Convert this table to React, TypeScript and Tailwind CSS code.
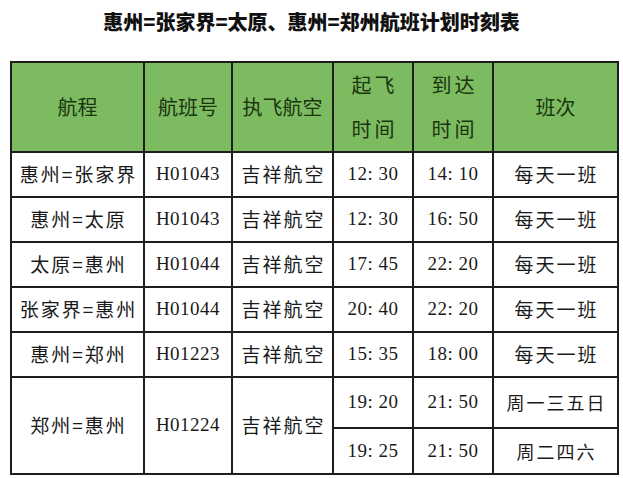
import React from "react";

const cjk = { fontFamily: '"Noto Sans CJK SC", "Noto Sans", sans-serif' };
const num = { fontFamily: '"Liberation Serif", "Noto Sans CJK SC", serif' };

type Row = {
  route: string;
  flight: string;
  airline: string;
  dep: string;
  arr: string;
  freq: string;
};

const rows: Row[] = [
  { route: "惠州=张家界", flight: "H01043", airline: "吉祥航空", dep: "12: 30", arr: "14: 10", freq: "每天一班" },
  { route: "惠州=太原", flight: "H01043", airline: "吉祥航空", dep: "12: 30", arr: "16: 50", freq: "每天一班" },
  { route: "太原=惠州", flight: "H01044", airline: "吉祥航空", dep: "17: 45", arr: "22: 20", freq: "每天一班" },
  { route: "张家界=惠州", flight: "H01044", airline: "吉祥航空", dep: "20: 40", arr: "22: 20", freq: "每天一班" },
  { route: "惠州=郑州", flight: "H01223", airline: "吉祥航空", dep: "15: 35", arr: "18: 00", freq: "每天一班" },
];

const td = "border-2 border-[#1e1e1e] text-center align-middle p-0 text-[#1a1a1a]";
const th = "border-2 border-[#1e1e1e] bg-[#7dbb60] text-center align-middle p-0 font-normal text-[#1a3510] text-[20px]";
const cjkCell = "text-[19px] tracking-[2px] pl-[2px]";
const numCell = "text-[19px] tracking-[0.5px] text-[#0a0a0a]";

export default function App() {
  return (
    <div className="w-[623px] h-[478px] bg-white overflow-hidden">
      <h1
        className="pt-[9px] h-[61px] text-center text-[20px] font-black text-[#111111] leading-[26px]"
        style={cjk}
      >
        惠州=张家界=太原、惠州=郑州航班计划时刻表
      </h1>
      <table className="ml-[10px] border-collapse table-fixed w-[607px]" style={cjk}>
        <colgroup>
          <col className="w-[133px]" />
          <col className="w-[88px]" />
          <col className="w-[101px]" />
          <col className="w-[80px]" />
          <col className="w-[80px]" />
          <col className="w-[125px]" />
        </colgroup>
        <thead>
          <tr className="h-[89px]">
            <th className={th}>航程</th>
            <th className={th}>航班号</th>
            <th className={th}>执飞航空</th>
            <th className={th}>
              <div className="leading-[44px] tracking-[3px] pl-[3px]">
                起飞
                <br />
                时间
              </div>
            </th>
            <th className={th}>
              <div className="leading-[44px] tracking-[3px] pl-[3px]">
                到达
                <br />
                时间
              </div>
            </th>
            <th className={th}>班次</th>
          </tr>
        </thead>
        <tbody>
          {rows.map((r, i) => (
            <tr key={i} className="h-[45px]">
              <td className={`${td} ${cjkCell}`}>{r.route}</td>
              <td className={`${td} ${numCell}`} style={num}>{r.flight}</td>
              <td className={`${td} ${cjkCell}`}>{r.airline}</td>
              <td className={`${td} ${numCell}`} style={num}>{r.dep}</td>
              <td className={`${td} ${numCell}`} style={num}>{r.arr}</td>
              <td className={`${td} ${cjkCell}`}>{r.freq}</td>
            </tr>
          ))}
          <tr className="h-[51px]">
            <td rowSpan={2} className={`${td} ${cjkCell}`}>郑州=惠州</td>
            <td rowSpan={2} className={`${td} ${numCell}`} style={num}>H01224</td>
            <td rowSpan={2} className={`${td} ${cjkCell}`}>吉祥航空</td>
            <td className={`${td} ${numCell}`} style={num}>19: 20</td>
            <td className={`${td} ${numCell}`} style={num}>21: 50</td>
            <td className={`${td} text-[18px] tracking-[2px] pl-[2px]`}>周一三五日</td>
          </tr>
          <tr className="h-[46px]">
            <td className={`${td} ${numCell}`} style={num}>19: 25</td>
            <td className={`${td} ${numCell}`} style={num}>21: 50</td>
            <td className={`${td} text-[18px] tracking-[2px] pl-[2px]`}>周二四六</td>
          </tr>
        </tbody>
      </table>
    </div>
  );
}
